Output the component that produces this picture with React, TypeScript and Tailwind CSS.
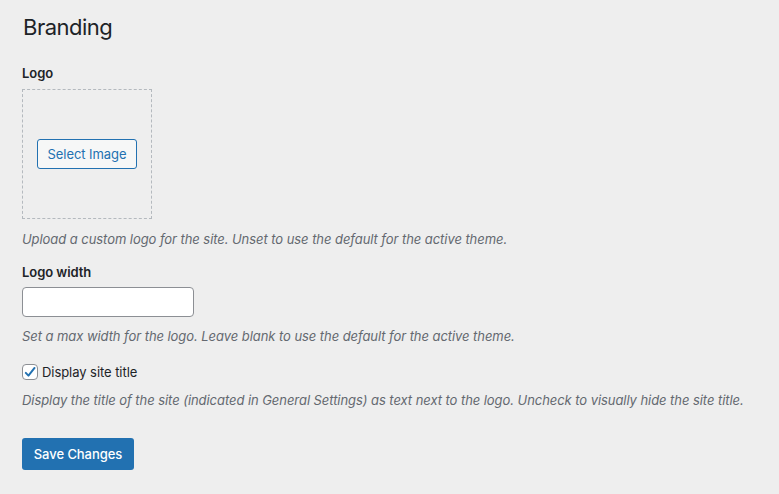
import React from "react";

export default function App() {
  const [showTitle, setShowTitle] = React.useState(true);
  const [width, setWidth] = React.useState("");

  return (
    <div className="min-h-screen bg-[#eeeeee] pl-[22px] pt-[13px] text-[13px] tracking-[-0.06px] text-[#1d2327] font-['Inter','Liberation_Sans',sans-serif]">
      <h2 className="pl-px text-[22px] leading-[29px] font-normal tracking-[-0.5px]">Branding</h2>

      <div className="mt-[22px] font-semibold leading-[18px]">Logo</div>
      <div className="mt-[7px] flex h-[130px] w-[130px] items-center justify-center border border-dashed border-[#b4b9be]">
        <button className="h-[30px] w-[100px] rounded-[3px] border border-[#2271b1] bg-[#f6f7f7] pt-px text-[13px] text-[#2271b1]">
          Select Image
        </button>
      </div>
      <p className="mt-[11px] italic leading-[18px] text-[#646970]">
        Upload a custom logo for the site. Unset to use the default for the active theme.
      </p>

      <div className="mt-[15px] font-semibold leading-[18px]">Logo width</div>
      <input
        type="text"
        value={width}
        onChange={(e) => setWidth(e.currentTarget.value)}
        className="mt-[6px] block h-[30px] w-[172px] rounded-[4px] border border-[#8c8f94] bg-white px-2"
      />
      <p className="mt-[10px] italic leading-[18px] text-[#646970]">
        Set a max width for the logo. Leave blank to use the default for the active theme.
      </p>

      <label className="mt-[19px] flex h-[16px] items-center gap-[4px]">
        <span
          onClick={() => setShowTitle(!showTitle)}
          className="flex h-[16px] w-[16px] items-center justify-center rounded-[4px] border border-[#8c8f94] bg-white"
        >
          {showTitle && (
            <svg width="15" height="15" viewBox="0 0 20 20">
              <path d="M4 10.5l3.8 4L16.5 3.5" fill="none" stroke="#2271b1" strokeWidth="2.8" strokeLinecap="round" strokeLinejoin="round" />
            </svg>
          )}
        </span>
        <span className="leading-[18px]">Display site title</span>
      </label>
      <p className="mt-[11px] italic leading-[18px] text-[#646970]">
        Display the title of the site (indicated in General Settings) as text next to the logo. Uncheck to visually hide the site title.
      </p>

      <button className="mt-[29px] h-[32px] w-[112px] rounded-[3px] bg-[#2271b1] pt-px text-[13px] font-medium text-white">
        Save Changes
      </button>
    </div>
  );
}
